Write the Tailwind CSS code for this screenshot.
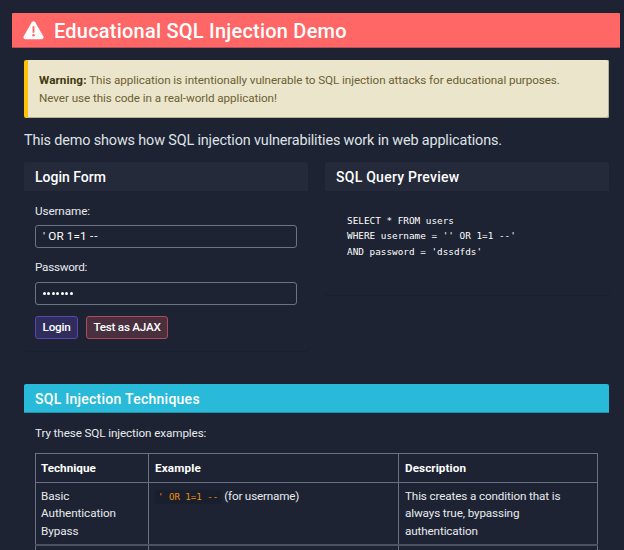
<!DOCTYPE html>
<html lang="en">
<head>
<meta charset="utf-8">
<title>Educational SQL Injection Demo</title>
<script src="https://cdn.jsdelivr.net/npm/@tailwindcss/browser@4"></script>
</head>
<body class="h-[550px] overflow-hidden bg-[#1d2332] pt-[13px] pr-1 pl-3 font-[Roboto,sans-serif] text-[11.7px] leading-[17.2px] text-[#e8eaee] whitespace-nowrap">
  <header class="flex h-[35px] items-center gap-[10px] rounded-[1px] border-b border-[#b94f58] bg-[#ff6666] pl-[11px] text-white">
    <svg class="mt-px h-[19px] w-[21px]" viewBox="0 0 21 19">
      <path d="M8.8 1.2Q10.5-.8 12.2 1.2L20.3 15.3Q21.2 18 18.5 18.3H2.5Q-.2 18 .7 15.3Z" fill="#fff"/>
      <path d="M10.5 6v5" stroke="#ff6666" stroke-width="1.9" stroke-linecap="round"/>
      <circle cx="10.5" cy="14.3" r="1.25" fill="#ff6666"/>
    </svg>
    <h1 class="mt-px text-[20px] leading-6 font-medium tracking-[0.22px]">Educational SQL Injection Demo</h1>
  </header>

  <main class="pt-3 pr-[11px] pl-3">
    <div class="h-[58px] rounded-[2px] border-l-4 border-[#ffc107] bg-[#ebe5cc] pt-[12px] pl-[11px] text-[#6b6133] shadow-[inset_-1px_-1px_0_#b8b293]">
      <p class="tracking-[-0.078px]"><strong class="font-bold tracking-[0.1px] text-[#40380f]">Warning:</strong> This application is intentionally vulnerable to SQL injection attacks for educational purposes.</p>
      <p class="mt-px tracking-[-0.07px]">Never use this code in a real-world application!</p>
    </div>

    <p class="mt-3 h-[31px] text-[14.4px] leading-[22px] tracking-[-0.14px] text-[#dfe2e6]">This demo shows how SQL injection vulnerabilities work in web applications.</p>

    <div class="mt-px grid h-[222px] grid-cols-[284px_284px] items-start justify-between">
      <section class="h-[189px] rounded-[2px] shadow-[0_1px_1px_#1b202f]">
        <h2 class="h-[29px] rounded-t-[2px] bg-[#242a39] pl-[11px] text-[14px] leading-[30px] font-medium text-white">Login Form</h2>
        <div class="pt-[12px] pl-[11px]">
          <label class="block tracking-[-0.1px]">Username:</label>
          <div class="mt-[5px] h-[23px] w-[262px] rounded-[3px] border border-[#6c7484] pl-[7px] leading-[21px] tracking-[0.15px] text-white">' OR 1=1 <span class="tracking-[1.2px]">--</span></div>
          <label class="mt-[11px] block tracking-[-0.27px]">Password:</label>
          <div class="mt-[6px] flex h-[23px] w-[262px] items-center gap-[1.45px] rounded-[3px] border border-[#6c7484] pl-[7px]">
            <i class="size-[3px] rounded-full bg-white"></i><i class="size-[3px] rounded-full bg-white"></i><i class="size-[3px] rounded-full bg-white"></i><i class="size-[3px] rounded-full bg-white"></i><i class="size-[3px] rounded-full bg-white"></i><i class="size-[3px] rounded-full bg-white"></i><i class="size-[3px] rounded-full bg-white"></i>
          </div>
          <div class="mt-[11px] flex gap-2">
            <button class="h-[23px] w-[43px] rounded-[3px] border border-[#5548b0] bg-[#302d5c] font-medium tracking-[-0.25px] text-white">Login</button>
            <button class="h-[23px] w-[82px] rounded-[3px] border border-[#b14b55] bg-[#4a303e] font-medium tracking-[-0.25px] text-white">Test as AJAX</button>
          </div>
        </div>
      </section>
      <section class="h-[133px] rounded-[2px] shadow-[0_1px_1px_#1b202f]">
        <h2 class="h-[29px] rounded-t-[2px] bg-[#242a39] pl-[11px] text-[14px] leading-[30px] font-medium tracking-[0.26px] text-white">SQL Query Preview</h2>
        <pre class="pt-[22px] pl-[22px] font-['DejaVu_Sans_Mono',monospace] text-[9.35px] leading-[15.4px] text-white">SELECT * FROM users
WHERE username = '' OR 1=1 --'
AND password = 'dssdfds'</pre>
      </section>
    </div>

    <section>
      <h2 class="h-[29px] rounded-t-[2px] border-b border-[#2291aa] bg-[#29bad9] pl-[11px] text-[14px] leading-[30px] font-medium tracking-[0.26px] text-white">SQL Injection Techniques</h2>
      <div class="px-[11px] pt-3">
        <p class="tracking-[-0.11px]">Try these SQL injection examples:</p>
        <table class="mt-[11px] w-[563px] table-fixed border-collapse text-left align-top">
          <colgroup><col class="w-[113px]"><col class="w-[250px]"><col></colgroup>
          <thead>
            <tr class="h-[29px] font-bold text-white">
              <th class="border border-[#6a7183] p-0 pl-[5px]">Technique</th>
              <th class="border border-[#6a7183] p-0 pl-[6px] tracking-[0.15px]">Example</th>
              <th class="border border-[#6a7183] p-0 pl-[6px] tracking-[0.08px]">Description</th>
            </tr>
          </thead>
          <tbody>
            <tr class="h-[62px] align-top">
              <td class="border border-[#6a7183] p-0 pt-[5px] pl-[5px] tracking-[-0.06px]">Basic<br>Authentication<br>Bypass</td>
              <td class="border border-[#6a7183] p-0 pt-[5px] pl-[6px]"><code class="mr-[3px] inline-block h-[14px] rounded-[2px] bg-[#1a1f2d] px-[3px] font-['DejaVu_Sans_Mono',monospace] text-[9.1px] leading-[14px] text-[#f09010]">' OR 1=1 --</code><span class="tracking-[-0.19px]">(for username)</span></td>
              <td class="border border-[#6a7183] p-0 pt-[5px] pl-[6px] tracking-[-0.13px]">This creates a condition that is<br>always true, bypassing<br>authentication</td>
            </tr>
            <tr class="h-[5px] leading-none">
              <td class="border border-t-2 border-b-0 border-[#6a7183] border-t-[#4c5264] p-0"></td><td class="border border-t-2 border-b-0 border-[#6a7183] border-t-[#4c5264] p-0"></td><td class="border border-t-2 border-b-0 border-[#6a7183] border-t-[#4c5264] p-0"></td>
            </tr>
          </tbody>
        </table>
      </div>
    </section>
  </main>
</body>
</html>
